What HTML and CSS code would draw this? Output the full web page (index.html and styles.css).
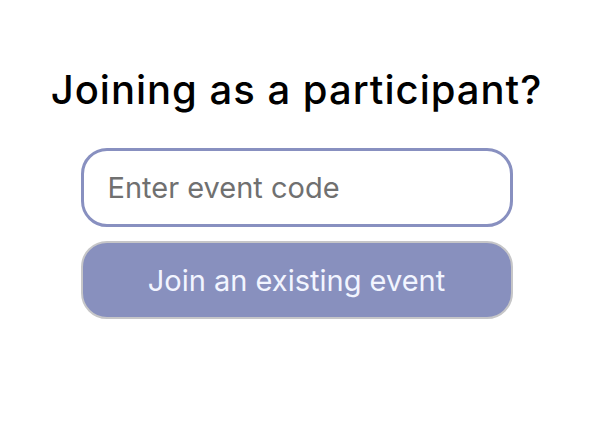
FILE: index.html
```html
<!DOCTYPE html>
<html lang="en">
<head>
<meta charset="utf-8">
<title>Join event</title>
<link rel="stylesheet" href="styles.css">
</head>
<body>
<main class="page">
  <h1 class="title">Joining as a participant?</h1>
  <form class="join-form">
    <input class="code-input" type="text" placeholder="Enter event code">
    <button class="join-btn" type="button">Join an existing event</button>
  </form>
</main>
</body>
</html>
```
FILE: styles.css
```css
html, body {
  margin: 0;
  padding: 0;
  background: #ffffff;
}
.page {
  width: 593px;
  display: flex;
  flex-direction: column;
  align-items: center;
  padding-top: 62px;
}
.title {
  margin: 0;
  font-family: "Inter", "DejaVu Sans", sans-serif;
  font-weight: 500;
  font-size: 40px;
  line-height: 56px;
  color: #000;
  letter-spacing: 1px;
}
.join-form {
  display: flex;
  flex-direction: column;
  gap: 14px;
  margin-top: 30px;
}
.code-input {
  box-sizing: border-box;
  width: 432px;
  height: 79px;
  border: 3px solid #8890c0;
  border-radius: 26px;
  padding: 0 24px;
  font-family: "Inter", "Liberation Sans", sans-serif;
  font-size: 29px;
  color: #333;
  background: #fff;
  outline: none;
}
.code-input::placeholder {
  color: #707070;
}
.join-btn {
  box-sizing: border-box;
  width: 432px;
  height: 78px;
  border: 2px solid #c6c6c8;
  border-radius: 26px;
  background: #8890be;
  color: #f2f5ff;
  font-family: "Inter", "Liberation Sans", sans-serif;
  font-size: 29px;
  cursor: pointer;
}
```
